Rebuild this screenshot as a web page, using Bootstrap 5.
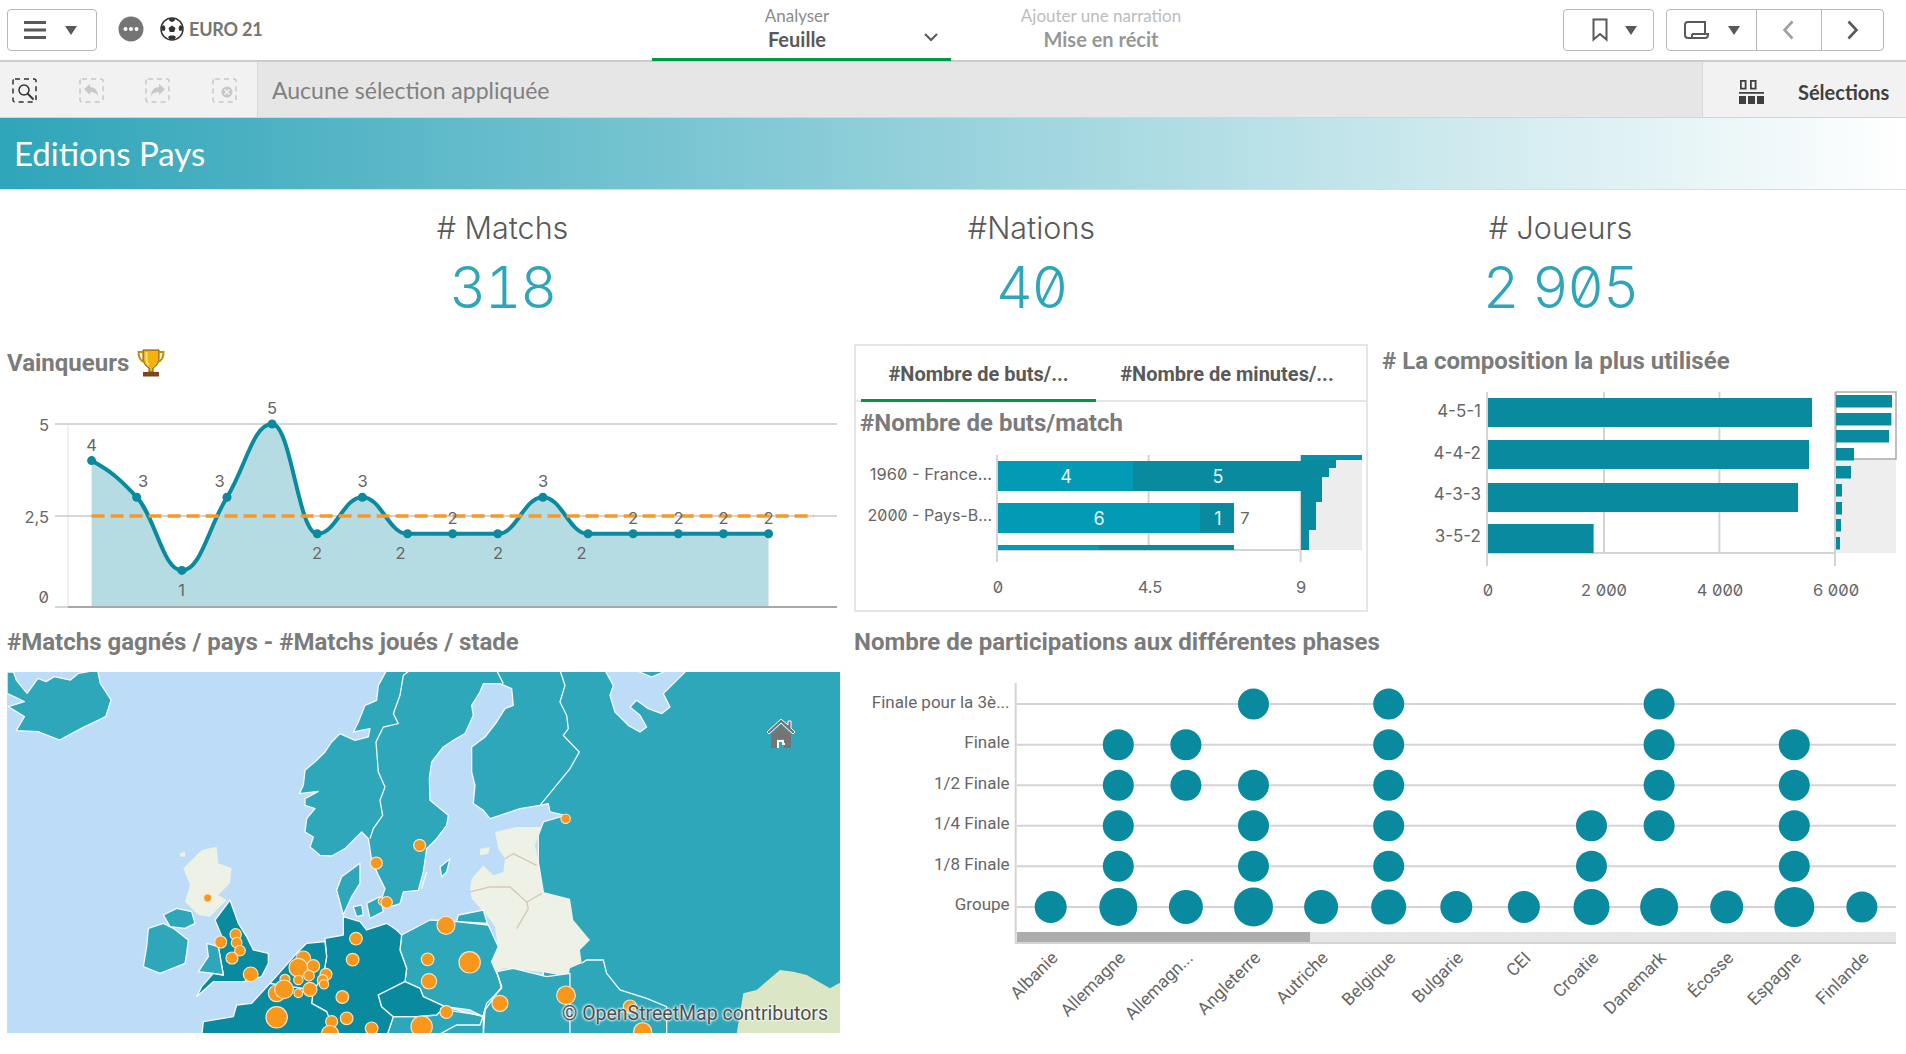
<!DOCTYPE html>
<html>

<head>
  <meta charset="utf-8">
  <link href="https://cdn.jsdelivr.net/npm/bootstrap@5.3.2/dist/css/bootstrap.min.css" rel="stylesheet" type="text/css" />
  <script src="https://cdn.jsdelivr.net/npm/bootstrap@5.3.2/dist/js/bootstrap.bundle.min.js"></script>
  <style>
    body { width: 1906px; height: 1054px; overflow: hidden; background: #fff; font-family: Lato, "Liberation Sans", sans-serif; }
    svg { display: block; }
    svg text { font-family: Inter, Roboto, sans-serif; font-feature-settings: "zero"; fill: #666; font-size: 16.5px; }

    .topbar { height: 62px; padding: 9px 22px 0 7px; border-bottom: 2px solid #ccc; }
    .tool-btn { height: 42px; border: 1px solid #b8b8b8; border-radius: 4px; background: #fff; padding: 0; }
    .menu-btn { width: 90px; gap: 19px; padding-right: 3px; }
    .book-btn { width: 91px; gap: 17px; padding-left: 11px; }
    .tool-group { width: 218px; margin-left: 12px; }
    .tool-group > div + div { border-left: 1px solid #b8b8b8; }
    .story-part { width: 89px; gap: 19px; }
    .back-part { width: 65px; padding-right: 3px; }
    .caret-down { width: 0; height: 0; border-left: 6.5px solid transparent; border-right: 6.5px solid transparent; border-top: 9px solid #595959; }
    .brand-box { height: 40px; margin-left: 21px; }
    .app-name { font-size: 18px; font-weight: 700; color: #757575; margin-left: 5px; letter-spacing: -.2px; }
    .mode-tabs { position: absolute; left: 652px; top: 0; height: 61px; }
    .mode-tab { height: 61px; text-align: center; }
    .mode-tab.on { width: 299px; border-bottom: 3px solid #009845; position: relative; }
    .mode-tab.off { width: 300px; }
    .mode-tab .sup { font-size: 17px; line-height: 18px; padding-top: 7px; color: #8c8c8c; box-sizing: content-box; height: 18px; }
    .mode-tab .main { font-size: 20px; line-height: 29px; font-weight: 700; color: #595959; }
    .mode-tab.on .sup, .mode-tab.on .main { width: 146px; margin-left: 72px; }
    .mode-tab.off .sup { color: #bcbcbc; }
    .mode-tab.off .main { color: #979797; }
    .mode-chev { position: absolute; left: 272px; top: 33px; }

    .selbar { height: 56px; background: #e6e6e6; border-bottom: 1px solid #d4d4d4; }
    .sel-left { width: 258px; background: #f2f2f2; border-right: 1px solid #d9d9d9; padding: 2px 0 0 12px; gap: 41.500px; }
    .sel-text { font-size: 23px; color: #808080; padding: 2px 0 0 14px; }
    .sel-right { width: 204px; background: #f2f2f2; border-left: 1px solid #d9d9d9; padding: 4px 0 0 36px; gap: 34px; font-size: 20px; font-weight: 700; color: #404040; }

    .band { height: 72px; background: linear-gradient(90deg, #2fa5b9 0%, #fff 100%); border-bottom: 1px solid #dcdcdc; color: #fff; font-size: 33px; padding-left: 14px; line-height: 71px; }

    .kpi-row { height: 150px; padding: 17px 81px 0 238px; }
    .kpi-label { font-size: 30.500px; line-height: 42px; color: #595959; font-family: Inter, Lato, sans-serif; font-weight: 300; }
    .kpi-value { font-family: Inter, sans-serif; font-feature-settings: "zero", "tnum"; font-weight: 300; font-size: 57px; line-height: 78px; color: #2ea6ba; letter-spacing: -1.500px; }

    .chart-row { padding-left: 7px; }
    .cell-left { width: 832px; }
    .cell-mid { width: 514px; margin-left: 15px; }
    .cell-right { width: 518px; margin-left: 14px; }
    .cell-wide { width: 1046px; margin-left: 15px; }
    .viz-title { font-family: Roboto, sans-serif; font-weight: 700; font-size: 24px; line-height: 30px; color: #7b7b7b; white-space: nowrap; }
    .viz-head { height: 45px; }
    .viz-head.lift { padding-bottom: 4px; }
    .row-a { height: 285px; }
    .row-b { height: 429px; padding-top: 2px; }
    .tab-box { height: 268px; margin-top: 4px; border: 2px solid #e6e6e6; }
    .tab-head { height: 56px; border-bottom: 2px solid #e6e6e6; }
    .tab-item { font-family: Roboto, sans-serif; font-weight: 700; font-size: 20px; color: #595959; padding-top: 13px; text-align: center; white-space: nowrap; }
    .tab-item.first { width: 235px; margin-left: 5px; border-bottom: 3px solid #009845; height: 56px; }
    .tab-item.second { width: 262px; }
    .tab-title { height: 36px; padding: 6px 0 0 4px; }

    .map-wrap { width: 833px; height: 361px; position: relative; overflow: hidden; margin-top: 15px; background: #bddcf8; }
    #mapSvg { filter: blur(.4px); }
    .map-credit { position: absolute; right: 12px; bottom: 8px; font-family: Roboto, sans-serif; font-size: 19.500px; line-height: 22px; color: #4f4f4f; text-shadow: 0 0 3px #fff, 0 0 3px #fff, 0 0 2px #fff; }
    .map-home { position: absolute; left: 759px; top: 45px; }
    .dot-svg { margin-top: 13px; }
  </style>
</head>

<body>
  <header class="topbar d-flex position-relative">
    <div class="tool-btn menu-btn d-flex align-items-center justify-content-center">
      <svg width="22" height="20" viewBox="0 0 22 20"><path d="M0 2.500h22M0 10h22M0 17.500h22" stroke="#595959" stroke-width="3" /></svg>
      <span class="caret-down"></span>
    </div>
    <div class="brand-box d-flex align-items-center">
      <svg width="26" height="26" viewBox="0 0 26 26"><circle cx="13" cy="13" r="12.500" fill="#757575" /><circle cx="7.500" cy="13" r="2" fill="#fff" /><circle cx="13" cy="13" r="2" fill="#fff" /><circle cx="18.500" cy="13" r="2" fill="#fff" /></svg>
      <svg class="ms-3" width="24" height="24" viewBox="0 0 24 24"><circle cx="12" cy="12" r="11" fill="#fff" stroke="#333" stroke-width="1.500" /><path d="M12 8.500l3.500 2.500-1.300 4h-4.400L8.500 11z" fill="#333" /><path d="M9 1.500h6l-.5 2.500L12 5l-2.500-1zM1.500 9.500l2.500-1.500 1.500 3-1 3-2.500-.5zM22.500 9.500L20 8l-1.500 3 1 3 2.500-.5zM8 20l2-1.500h4l2 1.500-1.500 2.500h-5z" fill="#333" /></svg>
      <span class="app-name">EURO 21</span>
    </div>
    <div class="mode-tabs d-flex">
      <div class="mode-tab on">
        <div class="sup">Analyser</div>
        <div class="main">Feuille</div>
        <svg class="mode-chev" width="14" height="9" viewBox="0 0 14 9"><path d="M1 1l6 6 6-6" fill="none" stroke="#595959" stroke-width="2" /></svg>
      </div>
      <div class="mode-tab off">
        <div class="sup">Ajouter une narration</div>
        <div class="main">Mise en récit</div>
      </div>
    </div>
    <div class="ms-auto d-flex">
      <div class="tool-btn book-btn d-flex align-items-center justify-content-center">
        <svg width="16" height="24" viewBox="0 0 16 24"><path d="M1.500 1.500h13v20L8 16l-6.500 5.500z" fill="none" stroke="#595959" stroke-width="2" /></svg>
        <span class="caret-down"></span>
      </div>
      <div class="tool-btn tool-group d-flex">
        <div class="story-part d-flex align-items-center justify-content-center">
          <svg width="25" height="19" viewBox="0 0 25 19"><path d="M4 1h17v12M8 13h16v1a3 3 0 0 1-3 3H4a3 3 0 0 1-3-3V4a3 3 0 0 1 3-3M8 13v4" fill="none" stroke="#595959" stroke-width="2" /></svg>
          <span class="caret-down"></span>
        </div>
        <div class="back-part d-flex align-items-center justify-content-center">
          <svg width="12" height="20" viewBox="0 0 12 20"><path d="M10.500 1.500L2.500 10l8 8.500" fill="none" stroke="#a0a0a0" stroke-width="2.600" /></svg>
        </div>
        <div class="d-flex align-items-center justify-content-center flex-grow-1">
          <svg width="12" height="20" viewBox="0 0 12 20"><path d="M1.500 1.500L9.500 10l-8 8.500" fill="none" stroke="#595959" stroke-width="2.600" /></svg>
        </div>
      </div>
    </div>
  </header>

  <div class="selbar d-flex">
    <div class="sel-left d-flex align-items-center">
      <svg width="25" height="25" viewBox="0 0 25 25"><rect x="1" y="1" width="23" height="23" rx="2" fill="none" stroke="#333" stroke-width="1.500" stroke-dasharray="5 4" /><circle cx="12" cy="12" r="5" fill="none" stroke="#333" stroke-width="1.500" /><path d="M15.500 15.500l6 6" stroke="#333" stroke-width="1.800" /></svg>
      <svg width="25" height="25" viewBox="0 0 25 25"><rect x="1" y="1" width="23" height="23" rx="2" fill="none" stroke="#c8c8c8" stroke-width="1.500" stroke-dasharray="5 4" /><path d="M5 11l6-5v3c5 0 8 4 8 9-2-3-4-4-8-4v3z" fill="#c8c8c8" /></svg>
      <svg width="25" height="25" viewBox="0 0 25 25"><rect x="1" y="1" width="23" height="23" rx="2" fill="none" stroke="#c8c8c8" stroke-width="1.500" stroke-dasharray="5 4" /><path d="M20 11l-6-5v3c-5 0-8 4-8 9 2-3 4-4 8-4v3z" fill="#c8c8c8" /></svg>
      <svg width="25" height="25" viewBox="0 0 25 25"><rect x="1" y="1" width="23" height="23" rx="2" fill="none" stroke="#c8c8c8" stroke-width="1.500" stroke-dasharray="5 4" /><circle cx="15" cy="14" r="5.500" fill="#c8c8c8" /><path d="M12.500 11.500l5 5M17.500 11.500l-5 5" stroke="#f2f2f2" stroke-width="1.500" /></svg>
    </div>
    <div class="sel-text flex-grow-1 d-flex align-items-center">Aucune sélection appliquée</div>
    <div class="sel-right d-flex align-items-center">
      <svg width="25" height="25" viewBox="0 0 25 25" fill="#404040"><path d="M1 1h6.500v9.500H1zM2.800 2.800v5.900h2.900V2.800zM11 1h6.500v9.500H11zM12.800 2.800v5.900h2.900V2.800z" fill-rule="evenodd" /><path d="M0 13h25v1.800H0zM0 17h7v8H0zM9 17h7v8H9zM18 17h7v8h-7z" /></svg>
      <span>Sélections</span>
    </div>
  </div>

  <div class="band">Editions Pays</div>

  <div class="kpi-row row g-0 text-center mx-0">
    <div class="col-4"><div class="kpi-label"># Matchs</div><div class="kpi-value">318</div></div>
    <div class="col-4"><div class="kpi-label">#Nations</div><div class="kpi-value">40</div></div>
    <div class="col-4"><div class="kpi-label"># Joueurs</div><div class="kpi-value">2 905</div></div>
  </div>

  <div class="chart-row row-a d-flex">
    <div class="cell-left">
      <div class="viz-head d-flex align-items-center gap-2">
        <div class="viz-title">Vainqueurs</div>
        <svg width="28" height="29" viewBox="0 0 28 29"><path d="M6 2h16v8c0 6-4 9-6 10v4h-4v-4c-2-1-6-4-6-10z" fill="#f5b30a" stroke="#6b4a10" stroke-width="1" /><path d="M6 4H1.500c0 6 2 9 6 10M22 4h4.500c0 6-2 9-6 10" fill="none" stroke="#c58a08" stroke-width="2" /><path d="M9.500 4v7c0 3 1 5 2 6" fill="none" stroke="#ffe27a" stroke-width="2" /><path d="M6 24h16v4.500H6z" fill="#7a4a1e" /></svg>
      </div>
      <svg id="lineChart" width="832" height="240" viewBox="7 385 832 240"></svg>
    </div>
    <div class="cell-mid tab-box">
      <div class="tab-head d-flex">
        <div class="tab-item first">#Nombre de buts/...</div>
        <div class="tab-item second">#Nombre de minutes/...</div>
      </div>
      <div class="viz-title tab-title">#Nombre de buts/match</div>
      <svg id="stackChart" width="510" height="172" viewBox="856 438 510 172"></svg>
    </div>
    <div class="cell-right">
      <div class="viz-head lift d-flex align-items-center"><div class="viz-title">#&nbsp;La composition la plus utilisée</div></div>
      <svg id="compoChart" width="524" height="235" viewBox="1382 385 524 235"></svg>
    </div>
  </div>

  <div class="chart-row row-b d-flex">
    <div class="cell-left">
      <div class="viz-title">#Matchs gagnés / pays - #Matchs joués / stade</div>
      <div class="map-wrap">
        <svg id="mapSvg" width="833" height="361" viewBox="7 672 833 361"></svg>
        <svg class="map-home" width="30" height="34" viewBox="0 0 30 34"><path d="M15 2L1 15l2 2L15 6l12 11 2-2-4-4V4h-3v4z" fill="#757575" stroke="#fff" stroke-width="1" /><path d="M5 17L15 8l10 9v14h-7v-9h-7v9H5z" fill="#757575" /><path d="M12 31v-7h5v3h2" fill="none" stroke="#fff" stroke-width="2" /></svg>
        <div class="map-credit">© OpenStreetMap contributors</div>
      </div>
    </div>
    <div class="cell-wide">
      <div class="viz-title">Nombre de participations aux différentes phases</div>
      <svg id="dotChart" class="dot-svg" width="1052" height="384" viewBox="854 670 1052 384"></svg>
    </div>
  </div>

  <script>
    const TEAL = "#0a8a9f"
    const text = (x, y, t, anchor, extra) => `<text x="${x}" y="${y}" text-anchor="${anchor || "middle"}" dominant-baseline="central" ${extra || ""}>${t}</text>`
    const line = (x1, y1, x2, y2, color, w) => `<line x1="${x1}" y1="${y1}" x2="${x2}" y2="${y2}" stroke="${color || "#d4d4d4"}" stroke-width="${w || 2}"/>`
    const rect = (x1, y1, x2, y2, color, extra) => `<rect x="${x1}" y="${y1}" width="${x2 - x1}" height="${y2 - y1}" fill="${color}" ${extra || ""}/>`

    // line chart, monotone curve like the Qlik smooth line
    function monotonePath(pts) {
      const n = pts.length
      const slope = []
      for (let i = 0; i < n - 1; i++) slope.push((pts[i + 1][1] - pts[i][1]) / (pts[i + 1][0] - pts[i][0]))
      const tan = [slope[0] * 0.7]
      for (let i = 1; i < n - 1; i++) tan.push(slope[i - 1] * slope[i] <= 0 ? 0 : 2 * slope[i - 1] * slope[i] / (slope[i - 1] + slope[i]))
      tan.push(0)
      let d = `M${pts[0][0]} ${pts[0][1]}`
      for (let i = 0; i < n - 1; i++) {
        const h = (pts[i + 1][0] - pts[i][0]) * 0.42
        d += `C${pts[i][0] + h} ${pts[i][1] + tan[i] * h} ${pts[i + 1][0] - h} ${pts[i + 1][1] - tan[i + 1] * h} ${pts[i + 1][0]} ${pts[i + 1][1]}`
      }
      return d
    }
    const vals = [4, 3, 1, 3, 5, 2, 3, 2, 2, 2, 3, 2, 2, 2, 2, 2]
    const pts = vals.map((v, i) => [91.6 + i * 45.13, 607 - v * 36.6])
    const labelPos = [[91.6, 445], [143, 481], [181.6, 590], [219.5, 481], [272, 408], [317, 553], [362.6, 481], [400.5, 553], [452.6, 518], [498, 553], [543, 481], [581.6, 553], [633, 518], [678.6, 518], [723.6, 518], [768.6, 518]]
    const curve = monotonePath(pts)
    let h = ""
    h += `<path d="M68 424V607" stroke="#e2e2e2" stroke-width="1" />`
    h += line(55, 424, 837, 424, "#d6d6d6") + line(55, 516, 837, 516, "#d6d6d6") + line(55, 607, 68, 607, "#d6d6d6")
    h += `<path d="${curve}V607H${pts[0][0]}Z" fill="#b6dce3"/>`
    h += line(68, 607, 837, 607, "#a8a8a8", 2)
    h += `<path d="${curve}" fill="none" stroke="${TEAL}" stroke-width="4"/>`
    h += line(91.6, 516, 814, 516, "#f7982a", 3.5).replace("/>", ' stroke-dasharray="13 6"/>')
    pts.forEach(p => h += `<circle cx="${p[0]}" cy="${p[1]}" r="4.500" fill="${TEAL}"/>`)
    vals.forEach((v, i) => h += text(labelPos[i][0], labelPos[i][1], v))
    h += text(49, 425, "5", "end") + text(49, 517, "2,5", "end") + text(49, 597, "0", "end")
    document.querySelector("#lineChart").innerHTML = h

    // stacked bars in the tab container
    const onBar = 'style="fill:#e8f5f7;font-size:18px"'
    h = ""
    h += line(997, 455, 997, 562) + line(1148.600, 455, 1148.600, 550) + line(1300.700, 455, 1300.700, 562) + line(997, 550, 1301, 550)
    h += rect(998, 461, 1133, 491, "#029ab5") + rect(1133, 461, 1301, 491, TEAL)
    h += rect(998, 503, 1200, 533, "#029ab5") + rect(1200, 503, 1234, 533, TEAL)
    h += rect(998, 545, 1099, 550, "#029ab5") + rect(1099, 545, 1234, 550, TEAL)
    h += `<polygon points="1301,455 1362,455 1362,460 1301,460" fill="#0a8fa8"/>`
    h += `<polygon points="1301,550 1301,460 1336,460 1336,468 1329,468 1329,477 1322,477 1322,502 1316,502 1316,530 1309,530 1309,550" fill="${TEAL}"/>`
    h += `<polygon points="1336,460 1362,460 1362,550 1309,550 1309,530 1316,530 1316,502 1322,502 1322,477 1329,477 1329,468 1336,468" fill="#ededed"/>`
    h += text(1066, 476, "4", "middle", onBar) + text(1218, 476, "5", "middle", onBar)
    h += text(1099, 518, "6", "middle", onBar) + text(1218, 518, "1", "middle", onBar) + text(1245, 518, "7", "middle")
    h += text(992, 474, "1960 - France...", "end") + text(992, 515, "2000 - Pays-B...", "end", 'style="font-size:16px"')
    h += text(998, 587, "0") + text(1150, 587, "4.5") + text(1301, 587, "9")
    document.querySelector("#stackChart").innerHTML = h

    // composition chart
    h = ""
    h += line(1487, 392, 1487, 566) + line(1604, 392, 1604, 553) + line(1719.400, 392, 1719.400, 553) + line(1835, 392, 1835, 566) + line(1487, 553, 1835, 553)
    const bars = [[398, 427, 1812, "4-5-1", 411], [440, 469, 1809, "4-4-2", 453], [483, 512, 1798, "4-3-3", 494], [524, 553, 1593.600, "3-5-2", 536]]
    bars.forEach(b => {
      h += rect(1488, b[0], b[2], b[1], TEAL)
      h += text(1481, b[4], b[3], "end", 'style="font-size:17px"')
    })
    h += rect(1836, 392, 1896, 553, "#eeeeee") + rect(1836, 392, 1896, 459, "#fff", 'stroke="#aaa" stroke-width="1.500"')
    const mini = [[395, 1892], [413, 1891.400], [430, 1889], [448, 1854], [466, 1851], [484, 1842], [502, 1842], [519, 1841], [537, 1840]]
    mini.forEach(m => h += rect(1836, m[0], m[1], m[0] + 12.500, TEAL))
    h += text(1488, 590, "0") + text(1604, 590, "2 000") + text(1720, 590, "4 000") + text(1836, 590, "6 000")
    document.querySelector("#compoChart").innerHTML = h

    // dot matrix: phases per country
    const rows = [["Finale pour la 3è...", 704, 702], ["Finale", 744.700, 742], ["1/2 Finale", 785.300, 783], ["1/4 Finale", 825.700, 823], ["1/8 Finale", 866.300, 864], ["Groupe", 907, 904]]
    const countries = ["Albanie", "Allemagne", "Allemagn...", "Angleterre", "Autriche", "Belgique", "Bulgarie", "CEI", "Croatie", "Danemark", "Écosse", "Espagne", "Finlande"]
    const colX = countries.map((c, i) => 1050.700 + i * 67.600)
    const matrix = [
      [3, 5, 9],
      [1, 2, 5, 9, 11],
      [1, 2, 3, 5, 9, 11],
      [1, 3, 5, 8, 9, 11],
      [1, 3, 5, 8, 11],
    ]
    const groupR = [16, 19, 17, 19.500, 17, 17.500, 16, 16, 18, 19, 16.500, 20, 15.500]
    h = line(1015.700, 683, 1015.700, 943)
    rows.forEach(r => {
      h += line(1017, r[1], 1896, r[1])
      h += text(1009.600, r[2], r[0], "end", 'style="font-family:Roboto,sans-serif;font-size:17px"')
    })
    matrix.forEach((m, r) => m.forEach(c => h += `<circle cx="${colX[c]}" cy="${rows[r][1]}" r="15.500" fill="${TEAL}"/>`))
    groupR.forEach((r, c) => h += `<circle cx="${colX[c]}" cy="907" r="${r}" fill="${TEAL}"/>`)
    h += rect(1017, 932, 1896, 942, "#e6e6e6") + rect(1017, 932, 1310, 942, "#aeadad") + line(1015, 943, 1896, 943)
    countries.forEach((c, i) => {
      const x = colX[i] + 8, y = 959
      h += `<text x="${x}" y="${y}" text-anchor="end" transform="rotate(-45 ${x} ${y})" style="font-family:Roboto,sans-serif;font-size:17.500px">${c}</text>`
    })
    document.querySelector("#dotChart").innerHTML = h

    // map, traced from crops of the reference: each crop has its own origin, at 3x
    const LAND = "#2fa7ba", DARK = TEAL, PALE = "#eef1e6", SEA = "#bddcf8", GREEN = "#dbe6c4"
    const NORTH = "translate(290 672) scale(.3333)"
    const WEST = "translate(130 840) scale(.3333)"
    const SOUTH = "translate(440 900) scale(.3333)"
    const ICE = "translate(0 660) scale(.542 .3333)"
    const shapes = [
      [ICE, LAND, "13,36 25,36 30,60 50,100 70,55 85,65 100,50 130,60 145,40 180,30 185,70 205,120 195,170 150,205 110,240 70,215 30,212 45,170 15,140 45,125 13,100"],
      [NORTH, LAND, "290,-5 265,40 260,85 225,100 205,150 190,180 240,170 235,195 195,205 150,185 125,210 105,240 80,265 45,295 40,340 28,365 85,358 45,380 45,400 75,410 50,440 45,480 70,495 60,525 90,550 125,552 165,530 215,480 235,500 245,565 265,610 285,650 275,680 300,705 330,695 340,660 385,655 400,600 410,530 440,500 470,460 475,430 420,385 418,320 425,270 460,225 490,205 525,185 550,130 545,100 570,60 580,35 630,35 665,50 670,100 645,110 620,150 585,195 545,225 545,300 555,340 550,395 580,415 600,440 690,410 750,400 775,395 780,420 825,430 810,435 760,450 745,490 745,570 760,660 760,1100 1660,1100 1660,-5"],
      [NORTH, SEA, "945,-5 970,40 960,70 975,120 1015,160 1050,180 1070,165 1050,130 1020,105 1040,85 1075,110 1115,125 1140,105 1120,65 1180,5 1190,-5"],
      [NORTH, LAND, "1030,-8 1085,15 1140,-8"],
      [NORTH, LAND, "450,585 480,560 470,600 455,615"],
      [NORTH, PALE, "615,480 680,465 755,465 735,520 745,570 760,660 840,680 850,744 900,804 870,834 875,874 840,889 835,914 750,899 640,889 620,899 605,864 625,834 615,764 590,730 545,680 540,650 545,620 580,580 610,610 640,600 645,560 625,530"],
      [NORTH, PALE, "570,530 600,525 595,545 570,550"],
      [SOUTH, GREEN, "890,402 910,280 950,270 1020,210 1060,215 1100,225 1170,265 1197,250 1260,250 1260,402"],
      [SOUTH, GREEN, "240,402 300,370 340,402"],
      [WEST, LAND, "1100,395 1150,385 1250,410 1320,400 1320,590 1060,590 1065,510 1115,440"],
      [WEST, LAND, "985,225 1060,210 1072,250 980,245"],
      [WEST, LAND, "815,285 900,240 980,245 1075,255 1105,320 1085,365 1105,410 1115,440 1065,510 1060,530 1020,510 945,500 880,470 870,445 825,425 830,385 810,330"],
      [WEST, LAND, "770,590 790,530 860,530 920,525 945,500 1000,515 1060,530 1060,590"],
      [WEST, DARK, "640,230 690,245 710,270 770,250 800,270 815,285 810,330 830,385 825,425 745,465 755,500 790,530 770,590 600,590 590,515 545,490 550,450 580,410 590,350 585,295 640,285"],
      [WEST, DARK, "745,465 825,425 870,445 880,470 945,500 920,525 860,530 790,530 755,500"],
      [WEST, DARK, "220,545 310,530 320,495 365,490 420,430 550,450 545,490 590,515 620,590 215,590"],
      [WEST, DARK, "420,430 500,340 530,310 585,305 590,350 580,410 550,450"],
      [WEST, LAND, "635,110 690,70 690,130 665,170 640,225 620,150"],
      [WEST, LAND, "670,200 695,195 700,225 680,230"],
      [WEST, LAND, "710,190 750,170 760,215 720,235"],
      [WEST, PALE, "215,30 260,20 265,70 305,85 300,130 265,165 290,180 240,230 205,225 165,185 180,135 160,85 185,60"],
      [WEST, PALE, "150,40 165,35 165,50 150,50"],
      [WEST, LAND, "55,265 100,250 130,265 175,300 170,340 165,370 90,400 40,380 50,320"],
      [WEST, LAND, "100,225 140,205 185,215 195,250 165,265 120,260"],
      [WEST, DARK, "300,180 325,250 350,290 370,330 415,340 415,370 395,410 340,425 250,425 200,470 215,440 250,400 280,405 265,320 280,300 255,240"],
      [WEST, LAND, "230,310 265,320 280,405 250,400 205,395 235,350"],
    ]
    const borders = [
      [NORTH, "#f4fbfd", "360,-5 340,10 330,70 310,125 325,155 280,165 258,210 265,300 285,345 270,385 278,430 250,470 240,500"],
      [NORTH, "#f4fbfd", "620,-5 640,35"],
      [NORTH, "#f4fbfd", "810,-5 825,40 810,90 830,130 835,170 820,190 868,240 840,290 750,400"],
      [NORTH, "#f4fbfd", "410,600 395,650"],
      [NORTH, "#d6c6bc", "540,660 600,645 660,645 710,690 755,665"],
      [NORTH, "#d6c6bc", "645,560 670,545 740,580"],
      [NORTH, "#d6c6bc", "710,690 715,710 680,770"],
      [SOUTH, "#f4fbfd", "425,190 440,180 490,180 500,220 540,270 620,295 680,320 680,402"],
      [SOUTH, "#f4fbfd", "170,215 185,265 140,310 130,345 120,375 50,375 0,402"],
      [SOUTH, "#f4fbfd", "0,325 50,335 120,345"],
    ]
    const circles = [
      [NORTH, 827, 440, 14], [NORTH, 389, 520, 18], [NORTH, 258, 573, 17],
      [WEST, 233, 174, 12], [WEST, 272, 306, 18], [WEST, 317, 283, 17], [WEST, 320, 308, 16], [WEST, 330, 332, 16], [WEST, 306, 354, 18], [WEST, 362, 403, 22],
      [WEST, 520, 355, 22], [WEST, 550, 378, 19], [WEST, 505, 383, 28], [WEST, 588, 403, 18], [WEST, 578, 420, 16], [WEST, 582, 433, 14], [WEST, 537, 407, 16], [WEST, 505, 420, 14], [WEST, 465, 418, 15], [WEST, 440, 460, 25], [WEST, 462, 448, 28], [WEST, 505, 460, 13], [WEST, 540, 448, 21],
      [WEST, 637, 471, 19], [WEST, 678, 296, 19], [WEST, 668, 359, 19], [WEST, 893, 358, 19], [WEST, 897, 424, 23], [WEST, 1019, 367, 32], [WEST, 948, 256, 27], [WEST, 1110, 490, 24], [WEST, 949, 516, 19], [WEST, 875, 560, 32], [WEST, 650, 535, 19], [WEST, 605, 545, 18], [WEST, 440, 532, 32], [WEST, 725, 565, 19], [WEST, 600, 582, 26], [WEST, 757, 184, 12], [WEST, 770, 187, 17], [WEST, 739, 69, 18],
      [SOUTH, 378, 286, 28], [SOUTH, 570, 320, 20], [SOUTH, 608, 395, 27],
    ]
    h = ""
    shapes.forEach(s => {
      const edge = s[1] === PALE || s[1] === GREEN ? "none" : "#f4fbfd"
      h += `<polygon transform="${s[0]}" points="${s[2]}" fill="${s[1]}" stroke="${edge}" stroke-width="1.300" stroke-linejoin="round" vector-effect="non-scaling-stroke"/>`
    })
    borders.forEach(b => h += `<polyline transform="${b[0]}" points="${b[2]}" fill="none" stroke="${b[1]}" stroke-width="1.300" vector-effect="non-scaling-stroke"/>`)
    circles.forEach(c => h += `<circle transform="${c[0]}" cx="${c[1]}" cy="${c[2]}" r="${c[3]}" fill="#f7981d" stroke="#fbe3c0" stroke-width="1.200" vector-effect="non-scaling-stroke"/>`)
    document.querySelector("#mapSvg").innerHTML = h
  </script>
</body>

</html>
